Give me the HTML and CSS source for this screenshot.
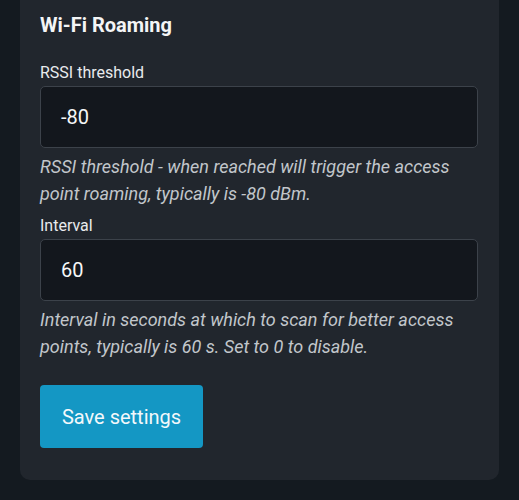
FILE: index.html
```html
<!DOCTYPE html>
<html lang="en">
<head>
<meta charset="utf-8">
<link rel="stylesheet" href="styles.css">
</head>
<body>
<div class="page">
  <section class="card">
    <h2 class="card-title">Wi-Fi Roaming</h2>
    <div class="field">
      <label class="field-label">RSSI threshold</label>
      <div class="input">-80</div>
      <p class="help">RSSI threshold - when reached will trigger the access point roaming, typically is -80 dBm.</p>
    </div>
    <div class="field">
      <label class="field-label">Interval</label>
      <div class="input">60</div>
      <p class="help">Interval in seconds at which to scan for better access points, typically is 60 s. Set to 0 to disable.</p>
    </div>
    <button class="btn">Save settings</button>
  </section>
</div>
</body>
</html>
```

FILE: styles.css
```css
html, body {
  margin: 0;
  padding: 0;
  background: #141a20;
  font-family: Roboto, "Liberation Sans", sans-serif;
}
.page {
  padding: 0 20px 22px 20px;
}
.card {
  background: #21262d;
  border-radius: 0 0 10px 10px;
  padding: 13px 21px 32px 20px;
  display: flex;
  flex-direction: column;
  align-items: flex-start;
}
.card-title {
  margin: 0 0 26px 0;
  font-size: 20px;
  line-height: 24px;
  font-weight: 700;
  color: #f4f5f6;
}
.field {
  align-self: stretch;
  display: flex;
  flex-direction: column;
}
.field + .field {
  margin-top: 9px;
}
.field-label {
  font-size: 16px;
  line-height: 20px;
  color: #e9ebed;
  margin-bottom: 3px;
}
.input {
  height: 60px;
  border: 1px solid #3c424a;
  border-radius: 5px;
  background: #13171d;
  color: #f6f7f8;
  font-size: 20px;
  padding-left: 20px;
  display: flex;
  align-items: center;
}
.help {
  margin: 5px 0 0 0;
  font-size: 18px;
  line-height: 27px;
  font-style: italic;
  color: #c2c6cb;
}
.btn {
  margin-top: 25px;
  width: 163px;
  height: 63px;
  border: none;
  border-radius: 4px;
  background: #1497c4;
  color: #f3f8fb;
  font-family: Roboto, "Liberation Sans", sans-serif;
  font-size: 20px;
  padding: 0;
}
```
